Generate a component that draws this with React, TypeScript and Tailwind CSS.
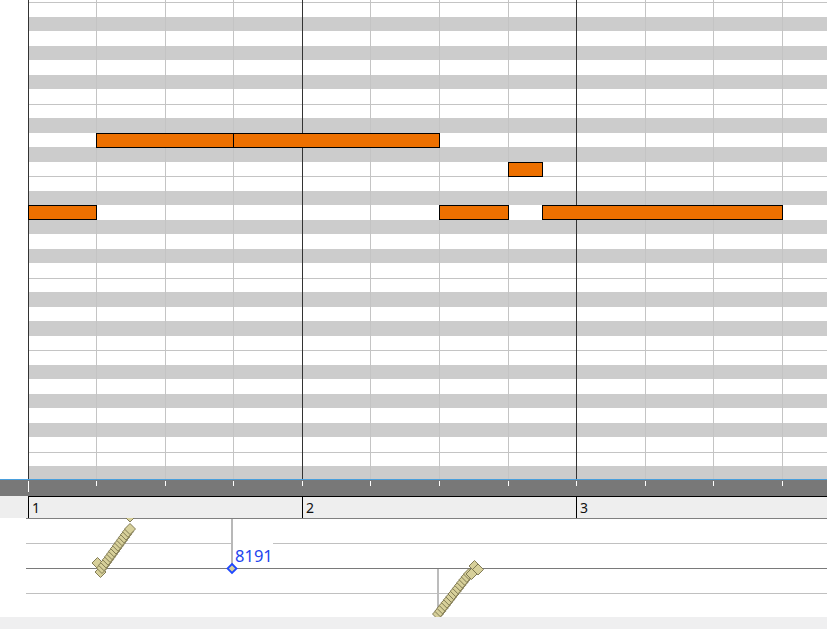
import React from "react";

const COLS: { w: string; bar: boolean }[] = [
  { w: "w-[68px]", bar: true },
  { w: "w-[69px]", bar: false },
  { w: "w-[68px]", bar: false },
  { w: "w-[69px]", bar: false },
  { w: "w-[68px]", bar: true },
  { w: "w-[69px]", bar: false },
  { w: "w-[69px]", bar: false },
  { w: "w-[68px]", bar: false },
  { w: "w-[69px]", bar: true },
  { w: "w-[68px]", bar: false },
  { w: "w-[69px]", bar: false },
];

const ROWS = Array.from({ length: 34 }, (_, i) => {
  const pc = (12 - (i % 12)) % 12;
  return { black: [1, 3, 6, 8, 10].includes(pc), line: pc === 11 || pc === 4 };
});

const NOTES = [
  "left-[68px] top-[133px] w-[138px]",
  "left-[205px] top-[133px] w-[207px]",
  "left-[480px] top-[162px] w-[35px]",
  "left-[0px] top-[205px] w-[69px]",
  "left-[411px] top-[205px] w-[70px]",
  "left-[514px] top-[205px] w-[241px]",
];

function diamond(x: number, y: number, h: number) {
  return `${x},${y - h} ${x + h},${y} ${x},${y + h} ${x - h},${y}`;
}

function chain(x0: number, y0: number, x1: number, y1: number, n: number) {
  const pts: [number, number][] = [];
  for (let i = 0; i < n; i++) {
    const t = i / (n - 1);
    pts.push([x0 + (x1 - x0) * t, y0 + (y1 - y0) * t]);
  }
  return pts;
}

const CHAIN1: [number, number][] = [
  [100.5, 572],
  [97.5, 563],
  ...chain(102, 568, 130, 529, 15),
  [130, 516.5],
];
const CHAIN2: [number, number][] = [
  ...chain(438, 614, 469, 574, 15),
  [471.5, 574],
  [474.5, 566],
  [478, 569.5],
];

const FILL = "#d7d09a";
const STROKE = "#77714b";

export default function App() {
  return (
    <div className="w-[827px] h-[629px] overflow-hidden bg-white flex flex-col font-['Noto_Sans',sans-serif]">
      {/* piano roll */}
      <div className="flex h-[479px] shrink-0">
        <div className="w-[28px] shrink-0 bg-white" />
        <div className="relative flex-1 overflow-hidden">
          <div className="flex flex-col mt-[-12.5px]">
            {ROWS.map((r, i) => (
              <div
                key={i}
                className={`h-[14.5px] shrink-0 ${r.black ? "bg-[#cccccc]" : "bg-white"} ${
                  r.line ? "border-t border-[#c4c4c4]" : ""
                }`}
              />
            ))}
          </div>
          <div className="absolute inset-0 flex">
            {COLS.map((c, i) => (
              <div
                key={i}
                className={`${c.w} shrink-0 h-full border-l ${c.bar ? "border-[#333333]" : "border-[#c4c4c4]"}`}
              />
            ))}
            <div className="flex-1 h-full border-l border-[#c4c4c4]" />
          </div>
          {NOTES.map((n, i) => (
            <div key={i} className={`absolute ${n} h-[15px] border border-black bg-[#ed7000]`} />
          ))}
        </div>
      </div>

      {/* blue separator */}
      <div className="h-px shrink-0 bg-[#4a9fdc]" />

      {/* tick band */}
      <div className="h-[16px] shrink-0 flex bg-[#787878]">
        <div className="w-[28px] shrink-0" />
        {COLS.map((c, i) => (
          <div key={i} className={`${c.w} shrink-0 pt-px`}>
            <div className={`w-px bg-white ${i === 0 ? "h-[11px]" : "h-[5px]"}`} />
          </div>
        ))}
        <div className="flex-1 pt-px">
          <div className="w-px h-[5px] bg-white" />
        </div>
      </div>

      {/* bar ruler */}
      <div className="h-[22px] shrink-0 flex bg-[#eeeeee]">
        <div className="w-[28px] shrink-0" />
        <div className="flex-1 flex border-t border-black text-[14px] leading-[14px] text-[#111111]">
          <div className="w-[274px] shrink-0 border-l border-black pl-[3px] pt-[4px]">1</div>
          <div className="w-[274px] shrink-0 border-l border-black pl-[3px] pt-[4px]">2</div>
          <div className="flex-1 border-l border-black pl-[3px] pt-[4px]">3</div>
        </div>
      </div>

      {/* controller lane */}
      <div className="relative h-[99px] shrink-0 flex bg-white">
        <div className="w-[26px] shrink-0" />
        <div className="flex-1 flex flex-col">
          <div className="h-[25px] shrink-0 border-t border-[#808080]" />
          <div className="h-[25px] shrink-0 border-t border-[#c0c0c0]" />
          <div className="h-[25px] shrink-0 border-t border-[#7a7a7a]" />
          <div className="h-[24px] shrink-0 border-t border-[#c0c0c0]" />
        </div>
        <div className="absolute left-[233px] top-[22px] w-[40px] h-[26px] bg-white pl-[2px] pt-[8px] text-[16.5px] leading-[16px] text-[#2244ee]">
          8191
        </div>
        <svg
          className="absolute left-0 top-0"
          width={827}
          height={99}
          viewBox="0 518 827 99"
        >
          <rect x={231} y={519} width={2} height={49} fill="#b8b8b8" />
          <rect x={437} y={569} width={2} height={48} fill="#bcbcbc" />
          {CHAIN1.map(([x, y], i) => (
            <polygon key={`a${i}`} points={diamond(x, y, 5.5)} fill={FILL} stroke={STROKE} strokeWidth={0.9} />
          ))}
          {CHAIN2.map(([x, y], i) => (
            <polygon key={`b${i}`} points={diamond(x, y, 5.5)} fill={FILL} stroke={STROKE} strokeWidth={0.9} />
          ))}
          <polygon points={diamond(232, 568.5, 4.5)} fill={FILL} stroke="#1f48ff" strokeWidth={1.8} />
        </svg>
      </div>

      {/* bottom strip */}
      <div className="h-[12px] shrink-0 bg-[#efeff0]" />
    </div>
  );
}
